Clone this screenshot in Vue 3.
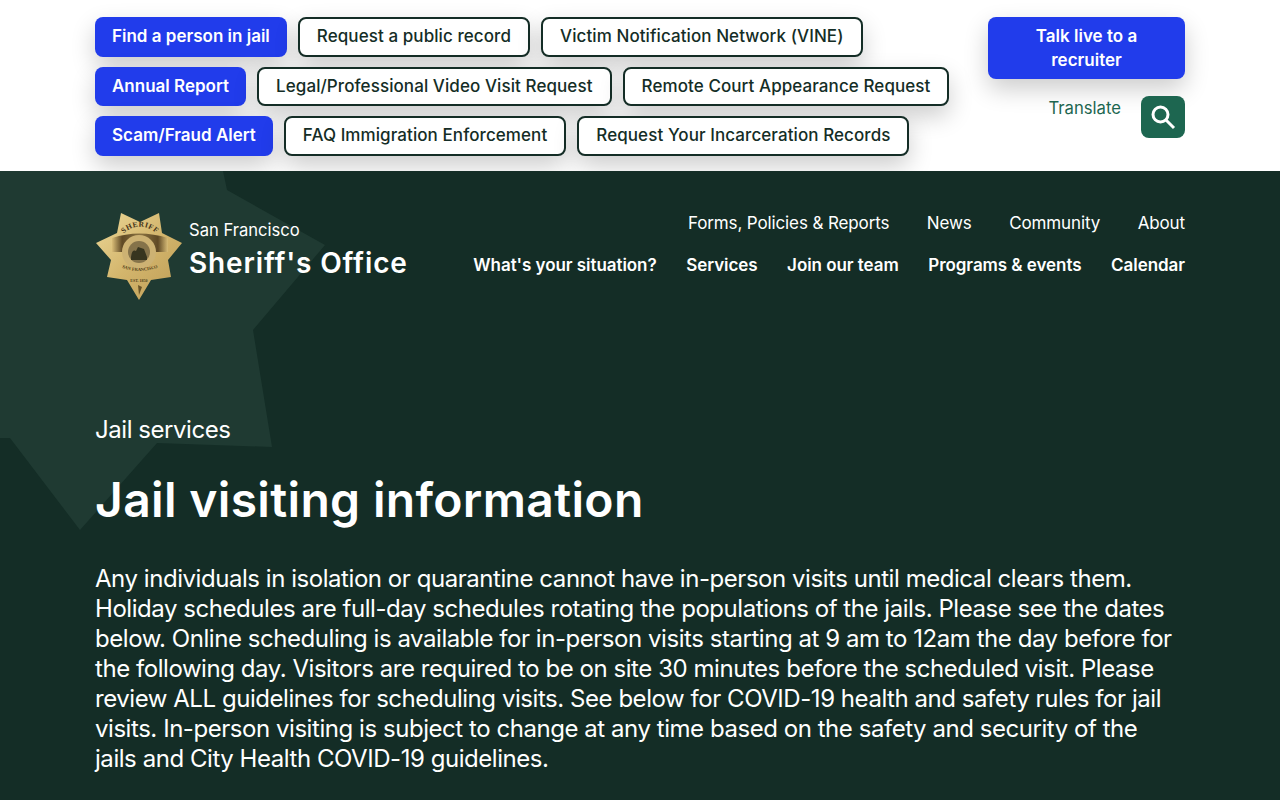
<template>
  <div class="page">
    <header class="topbar">
      <div class="wrap topbar-inner">
        <div class="quick">
          <div v-for="(row, i) in quickRows" :key="i" class="quick-row">
            <a v-for="b in row" :key="b.label" class="btn" :class="{ primary: b.primary }">{{ b.label }}</a>
          </div>
        </div>
        <div class="side">
          <a class="btn primary recruit">Talk live to a recruiter</a>
          <div class="tools">
            <span class="translate">Translate</span>
            <button class="search" aria-label="Search">
              <svg width="26" height="26" viewBox="0 0 26 26" fill="none">
                <circle cx="10.5" cy="10.5" r="7.5" stroke="#fff" stroke-width="3" />
                <path d="M16 16 L24 24" stroke="#fff" stroke-width="3" />
              </svg>
            </button>
          </div>
        </div>
      </div>
    </header>

    <section class="hero">
      <svg class="bg-star" width="340" height="380" viewBox="0 0 340 380">
        <path d="M223 0 L227 19 L325 74 L253 159 L272 276 L157 272 L80 359 L10 267 L0 267 L0 0 Z" fill="#1f3a32" />
      </svg>
      <div class="wrap hero-inner">
        <div class="head">
          <div class="brand">
            <svg class="badge" width="90" height="90" viewBox="1 7 90 90">
              <defs>
                <linearGradient id="gold" x1="0" y1="0" x2="1" y2="1">
                  <stop offset="0" stop-color="#ecd898" />
                  <stop offset="0.5" stop-color="#d3b56c" />
                  <stop offset="1" stop-color="#bd9c55" />
                </linearGradient>
                <linearGradient id="band" x1="0" y1="0" x2="1" y2="0">
                  <stop offset="0" stop-color="#d9bd77" />
                  <stop offset="0.18" stop-color="#5f4925" />
                  <stop offset="0.5" stop-color="#8b7341" />
                  <stop offset="0.82" stop-color="#5f4925" />
                  <stop offset="1" stop-color="#d9bd77" />
                </linearGradient>
                <path id="arcTop" d="M24 38 A23 23 0 0 1 68 38" />
                <path id="arcLow" d="M24 61 Q45 71 68 61" />
              </defs>
              <path d="M27 8 L46 17 L65 8 L68 28 L88 38 L74 55 L77 72 L57 75 L45 95 L33 75 L13 72 L17 55 L2 38 L23 28 Z" fill="url(#gold)" />
              <path d="M18 33 Q45 24 74 33 V47 H18 Z" fill="url(#band)" />
              <circle cx="45" cy="47" r="17" fill="#cdb273" />
              <circle cx="45" cy="47" r="11" fill="#85734a" />
              <path d="M37 52 Q38 44 42 46 L44 42 L50 44 L53 52 V55 H37 Z" fill="#37351f" />
              <text class="badge-top"><textPath href="#arcTop" startOffset="50%" text-anchor="middle">SHERIFF</textPath></text>
              <text class="badge-low"><textPath href="#arcLow" startOffset="50%" text-anchor="middle">SAN FRANCISCO</textPath></text>
              <text class="badge-est" x="45" y="77" text-anchor="middle">EST. 1850</text>
              <path d="M44 80 L48 82 L45 90 Z" fill="#6a5428" />
            </svg>
            <div class="brand-text">
              <span class="city">San Francisco</span>
              <span class="office">Sheriff's Office</span>
            </div>
          </div>
          <nav class="nav">
            <div class="nav-top"><a v-for="n in navTop" :key="n">{{ n }}</a></div>
            <div class="nav-main"><a v-for="n in navMain" :key="n">{{ n }}</a></div>
          </nav>
        </div>
        <p class="crumb">Jail services</p>
        <h1>Jail visiting information</h1>
        <p class="intro">Any individuals in isolation or quarantine cannot have in-person visits until medical clears them. Holiday schedules are full-day schedules rotating the populations of the jails. Please see the dates below. Online scheduling is available for in-person visits starting at 9 am to 12am the day before for the following day. Visitors are required to be on site 30 minutes before the scheduled visit. Please review ALL guidelines for scheduling visits. See below for COVID-19 health and safety rules for jail visits. In-person visiting is subject to change at any time based on the safety and security of the jails and City Health COVID-19 guidelines.</p>
      </div>
    </section>
  </div>
</template>

<script setup>
const quickRows = [
  [
    { label: 'Find a person in jail', primary: true },
    { label: 'Request a public record' },
    { label: 'Victim Notification Network (VINE)' }
  ],
  [
    { label: 'Annual Report', primary: true },
    { label: 'Legal/Professional Video Visit Request' },
    { label: 'Remote Court Appearance Request' }
  ],
  [
    { label: 'Scam/Fraud Alert', primary: true },
    { label: 'FAQ Immigration Enforcement' },
    { label: 'Request Your Incarceration Records' }
  ]
]

const navTop = ['Forms, Policies & Reports', 'News', 'Community', 'About']
const navMain = ["What's your situation?", 'Services', 'Join our team', 'Programs & events', 'Calendar']
</script>

<style>
html, body { margin: 0; background: #142d26; overflow: hidden; }
</style>

<style scoped>
.page {
  height: 800px;
  overflow: hidden;
  font-family: Inter, Roboto, sans-serif;
  background: #142d26;
}
.wrap {
  width: 1090px;
  margin: 0 auto;
}
.topbar {
  background: #fff;
  height: 171px;
  overflow: hidden;
}
.topbar-inner {
  display: flex;
  justify-content: space-between;
  padding-top: 17px;
}
.quick {
  display: flex;
  flex-direction: column;
  gap: 10px;
}
.quick-row {
  display: flex;
  gap: 11px;
}
.btn {
  box-sizing: border-box;
  height: 39.5px;
  padding: 0 17px 1px;
  display: flex;
  align-items: center;
  border: 2px solid #142d26;
  border-radius: 8px;
  background: #fff;
  color: #142d26;
  font-size: 17px;
  font-weight: 500;
  letter-spacing: 0.08px;
  white-space: nowrap;
  box-shadow: 0 10px 25px rgba(0, 0, 0, 0.2);
}
.btn.primary {
  background: #213ceb;
  border: none;
  color: #fff;
  font-weight: 600;
  letter-spacing: 0;
}
.side {
  width: 197px;
  display: flex;
  flex-direction: column;
}
.recruit {
  height: 62px;
  justify-content: center;
  text-align: center;
  line-height: 24px;
  padding: 0 40px;
  white-space: normal;
}
.tools {
  margin-top: 17px;
  display: flex;
  justify-content: flex-end;
  gap: 20px;
}
.translate {
  color: #1d6650;
  font-size: 16.7px;
  margin-top: 2px;
}
.search {
  width: 44px;
  height: 42px;
  padding: 0;
  border: none;
  border-radius: 8px;
  background: #1d6650;
  display: flex;
  align-items: center;
  justify-content: center;
}
.hero {
  position: relative;
  color: #fff;
}
.bg-star {
  position: absolute;
  top: 0;
  left: 0;
}
.hero-inner {
  position: relative;
}
.head {
  display: flex;
  justify-content: space-between;
  padding-top: 41px;
}
.brand {
  display: flex;
  align-items: center;
  gap: 4px;
  height: 90px;
}
.brand-text {
  display: flex;
  flex-direction: column;
  gap: 6px;
  margin-top: -14px;
}
.city { font-size: 16.6px; }
.office {
  font-size: 28px;
  font-weight: 600;
  letter-spacing: 0.85px;
}
.badge-top {
  font: 700 7.5px "Liberation Serif", serif;
  fill: #3f3015;
  letter-spacing: 0.5px;
}
.badge-low {
  font: 700 4.5px "Liberation Serif", serif;
  fill: #4f3d1b;
}
.badge-est {
  font: 700 4px "Liberation Serif", serif;
  fill: #4f3d1b;
}
.nav {
  display: flex;
  flex-direction: column;
  align-items: flex-end;
}
.nav-top {
  display: flex;
  gap: 37.5px;
  font-size: 17px;
  letter-spacing: -0.12px;
  margin-top: 1px;
}
.nav-main {
  display: flex;
  gap: 29.5px;
  margin-top: 22px;
  font-size: 17px;
  font-weight: 600;
  letter-spacing: -0.05px;
}
.crumb {
  margin: 112px 0 0;
  font-size: 24px;
  letter-spacing: -0.45px;
  line-height: 32px;
}
h1 {
  margin: 23.5px 0 0;
  font-size: 48px;
  font-weight: 600;
  letter-spacing: 0.33px;
  line-height: 60px;
}
.intro {
  margin: 34px 0 0;
  max-width: 1082px;
  font-size: 24px;
  letter-spacing: -0.45px;
  line-height: 30px;
}
</style>
